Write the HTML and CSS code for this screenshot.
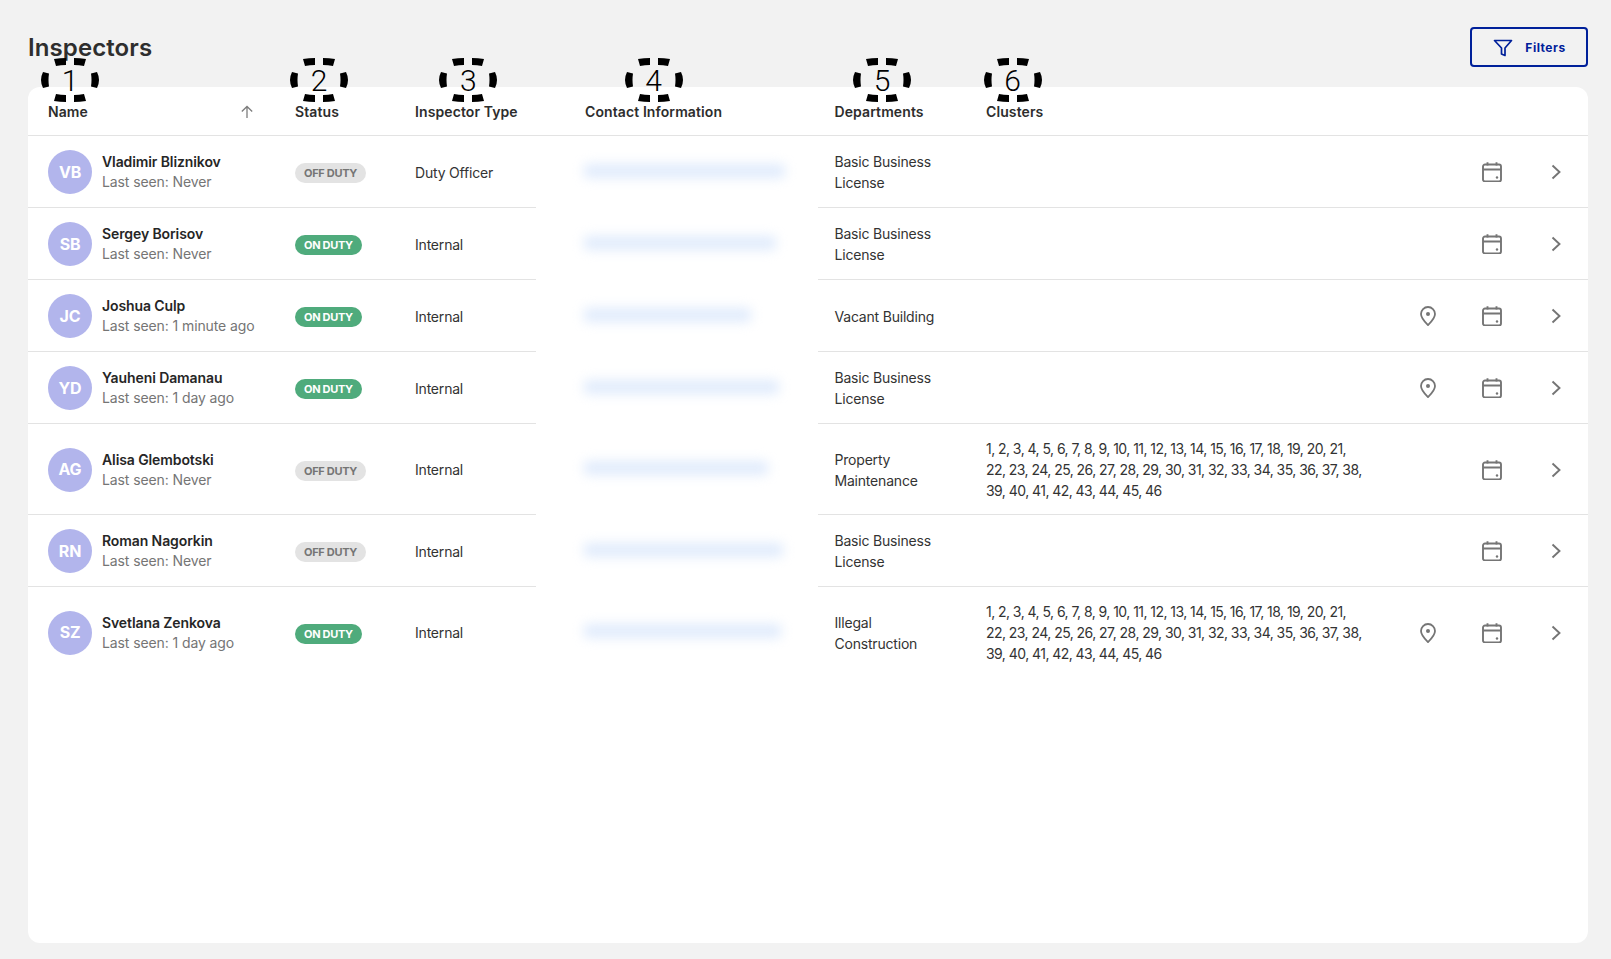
FILE: index.html
```html
<!DOCTYPE html>
<html lang="en">
<head>
<meta charset="utf-8">
<title>Inspectors</title>
<link rel="stylesheet" href="styles.css">
</head>
<body>
<svg class="sprite" aria-hidden="true">
  <symbol id="i-cal" viewBox="0 0 20 20"><path d="M3 2.500h14a2 2 0 0 1 2 2v13a2 2 0 0 1-2 2H3a2 2 0 0 1-2-2v-13a2 2 0 0 1 2-2ZM1 7.500h18M5.500 0.200v3.600M14.500 0.200v3.600" fill="none" stroke="currentColor" stroke-width="1.900"/><circle cx="15" cy="15.500" r="1.200" fill="currentColor"/></symbol>
  <symbol id="i-pin" viewBox="0 0 16 20"><path d="M8 19C4.500 15.600 1 12.300 1 8a7 7 0 0 1 14 0c0 4.300-3.500 7.600-7 11Z" fill="none" stroke="currentColor" stroke-width="1.800" stroke-linejoin="round"/><circle cx="8" cy="8" r="2" fill="currentColor"/></symbol>
  <symbol id="i-chev" viewBox="0 0 10 16"><path d="M1.500 1.500 8.500 8l-7 6.500" fill="none" stroke="currentColor" stroke-width="1.900"/></symbol>
  <symbol id="i-mark" viewBox="0 0 58 44"><path d="M13 1Q19 0 25 0V7Q20 7 15 8ZM33 0Q39 0 45 1L43 8Q38 7 33 7ZM2 14 8 15.500Q7 22 8 28.500L2 30Q-2 22 2 14ZM56 14 50 15.500Q51 22 50 28.500L56 30Q60 22 56 14ZM13 43Q19 44 25 44V37Q20 37 15 36ZM33 44Q39 44 45 43L43 36Q38 37 33 37Z" fill="#000"/></symbol>
</svg>
<main class="page">
  <header class="topbar">
    <h1 class="title">Inspectors</h1>
    <button class="filters" type="button">
      <svg class="filters-icon" viewBox="0 0 20 18"><path d="M1.500 1.500h17L12 9v7.500L8.500 15V9Z" fill="none" stroke="currentColor" stroke-width="1.700" stroke-linejoin="round"/></svg>
      <span>Filters</span>
    </button>
  </header>
  <section class="card">
    <table class="grid">
      <colgroup>
        <col class="c-name"><col class="c-status"><col class="c-type"><col class="c-contact"><col class="c-dept"><col class="c-clusters"><col class="c-icon"><col class="c-icon"><col class="c-icon">
      </colgroup>
      <thead>
        <tr>
          <th class="first"><div class="name-head"><span class="hd">Name<span class="marker m1"><svg><use href="#i-mark"/></svg><b>1</b></span></span><svg class="sort" viewBox="0 0 14 14"><path d="M7 13V1.500M1.800 6.500 7 1.500l5.200 5" fill="none" stroke="currentColor" stroke-width="1.300"/></svg></div></th>
          <th><span class="hd">Status<span class="marker m2"><svg><use href="#i-mark"/></svg><b>2</b></span></span></th>
          <th><span class="hd">Inspector Type<span class="marker m3"><svg><use href="#i-mark"/></svg><b>3</b></span></span></th>
          <th><span class="hd">Contact Information<span class="marker"><svg><use href="#i-mark"/></svg><b>4</b></span></span></th>
          <th class="dept"><span class="hd">Departments<span class="marker m5"><svg><use href="#i-mark"/></svg><b>5</b></span></span></th>
          <th><span class="hd">Clusters<span class="marker m6"><svg><use href="#i-mark"/></svg><b>6</b></span></span></th>
          <th></th><th></th><th></th>
        </tr>
      </thead>
      <tbody>
        <tr>
          <td class="first"><div class="person"><span class="avatar">VB</span><div><div class="pname">Vladimir Bliznikov</div><div class="seen">Last seen: Never</div></div></div></td>
          <td><span class="badge off">OFF DUTY</span></td>
          <td>Duty Officer</td>
          <td class="contact"><span class="smear" style="width:201px"></span></td>
          <td class="dept">Basic Business License</td>
          <td class="clusters"></td>
          <td class="ic"></td>
          <td class="ic"><svg class="cal"><use href="#i-cal"/></svg></td>
          <td class="ic"><svg class="chev"><use href="#i-chev"/></svg></td>
        </tr>
        <tr>
          <td class="first"><div class="person"><span class="avatar">SB</span><div><div class="pname">Sergey Borisov</div><div class="seen">Last seen: Never</div></div></div></td>
          <td><span class="badge on">ON DUTY</span></td>
          <td>Internal</td>
          <td class="contact"><span class="smear" style="width:192px"></span></td>
          <td class="dept">Basic Business License</td>
          <td class="clusters"></td>
          <td class="ic"></td>
          <td class="ic"><svg class="cal"><use href="#i-cal"/></svg></td>
          <td class="ic"><svg class="chev"><use href="#i-chev"/></svg></td>
        </tr>
        <tr>
          <td class="first"><div class="person"><span class="avatar">JC</span><div><div class="pname">Joshua Culp</div><div class="seen">Last seen: 1 minute ago</div></div></div></td>
          <td><span class="badge on">ON DUTY</span></td>
          <td>Internal</td>
          <td class="contact"><span class="smear" style="width:167px"></span></td>
          <td class="dept">Vacant Building</td>
          <td class="clusters"></td>
          <td class="ic"><svg class="pin"><use href="#i-pin"/></svg></td>
          <td class="ic"><svg class="cal"><use href="#i-cal"/></svg></td>
          <td class="ic"><svg class="chev"><use href="#i-chev"/></svg></td>
        </tr>
        <tr>
          <td class="first"><div class="person"><span class="avatar">YD</span><div><div class="pname">Yauheni Damanau</div><div class="seen">Last seen: 1 day ago</div></div></div></td>
          <td><span class="badge on">ON DUTY</span></td>
          <td>Internal</td>
          <td class="contact"><span class="smear" style="width:195px"></span></td>
          <td class="dept">Basic Business License</td>
          <td class="clusters"></td>
          <td class="ic"><svg class="pin"><use href="#i-pin"/></svg></td>
          <td class="ic"><svg class="cal"><use href="#i-cal"/></svg></td>
          <td class="ic"><svg class="chev"><use href="#i-chev"/></svg></td>
        </tr>
        <tr>
          <td class="first"><div class="person"><span class="avatar">AG</span><div><div class="pname">Alisa Glembotski</div><div class="seen">Last seen: Never</div></div></div></td>
          <td><span class="badge off">OFF DUTY</span></td>
          <td>Internal</td>
          <td class="contact"><span class="smear" style="width:184px"></span></td>
          <td class="dept">Property Maintenance</td>
          <td class="clusters">1, 2, 3, 4, 5, 6, 7, 8, 9, 10, 11, 12, 13, 14, 15, 16, 17, 18, 19, 20, 21, 22, 23, 24, 25, 26, 27, 28, 29, 30, 31, 32, 33, 34, 35, 36, 37, 38, 39, 40, 41, 42, 43, 44, 45, 46</td>
          <td class="ic"></td>
          <td class="ic"><svg class="cal"><use href="#i-cal"/></svg></td>
          <td class="ic"><svg class="chev"><use href="#i-chev"/></svg></td>
        </tr>
        <tr>
          <td class="first"><div class="person"><span class="avatar">RN</span><div><div class="pname">Roman Nagorkin</div><div class="seen">Last seen: Never</div></div></div></td>
          <td><span class="badge off">OFF DUTY</span></td>
          <td>Internal</td>
          <td class="contact"><span class="smear" style="width:199px"></span></td>
          <td class="dept">Basic Business License</td>
          <td class="clusters"></td>
          <td class="ic"></td>
          <td class="ic"><svg class="cal"><use href="#i-cal"/></svg></td>
          <td class="ic"><svg class="chev"><use href="#i-chev"/></svg></td>
        </tr>
        <tr class="last">
          <td class="first"><div class="person"><span class="avatar">SZ</span><div><div class="pname">Svetlana Zenkova</div><div class="seen">Last seen: 1 day ago</div></div></div></td>
          <td><span class="badge on">ON DUTY</span></td>
          <td>Internal</td>
          <td class="contact"><span class="smear" style="width:197px"></span></td>
          <td class="dept">Illegal Construction</td>
          <td class="clusters">1, 2, 3, 4, 5, 6, 7, 8, 9, 10, 11, 12, 13, 14, 15, 16, 17, 18, 19, 20, 21, 22, 23, 24, 25, 26, 27, 28, 29, 30, 31, 32, 33, 34, 35, 36, 37, 38, 39, 40, 41, 42, 43, 44, 45, 46</td>
          <td class="ic"><svg class="pin"><use href="#i-pin"/></svg></td>
          <td class="ic"><svg class="cal"><use href="#i-cal"/></svg></td>
          <td class="ic"><svg class="chev"><use href="#i-chev"/></svg></td>
        </tr>
      </tbody>
    </table>
  </section>
</main>
</body>
</html>
```
FILE: styles.css
```css
* { box-sizing: border-box; }
html, body { margin: 0; height: 100%; }
body {
  background: #f2f2f2;
  color: #333;
  font-family: Inter, "Open Sans", sans-serif;
  font-size: 14px;
  line-height: 21px;
  letter-spacing: -0.2px;
}
.sprite { display: none; }
.page {
  display: flex;
  flex-direction: column;
  height: 959px;
  padding: 27px 23px 16px 28px;
}
.topbar {
  display: flex;
  align-items: center;
  justify-content: space-between;
  height: 40px;
  margin-bottom: 20px;
}
.title {
  margin: 2px 0 0;
  font-size: 24px;
  line-height: 32px;
  font-weight: 600;
  color: #2e2e2e;
  letter-spacing: 0.1px;
}
.filters {
  display: flex;
  align-items: center;
  justify-content: center;
  gap: 12px;
  width: 118px;
  height: 40px;
  padding: 2px 0 0 1px;
  background: transparent;
  border: 2px solid #00209a;
  border-radius: 4px;
  color: #00209a;
  font: 700 12px/16px Inter, sans-serif;
  letter-spacing: 0.5px;
}
.filters-icon { width: 20px; height: 18px; }
.card {
  flex: 1;
  background: #fff;
  border-radius: 12px;
}
.grid {
  width: 100%;
  table-layout: fixed;
  border-collapse: separate;
  border-spacing: 0;
}
.c-name { width: 251px; }
.c-status { width: 120px; }
.c-type { width: 170px; }
.c-contact { width: 249px; }
.c-dept { width: 152px; }
.c-clusters { width: 426px; }
.c-icon { width: 64px; }
th {
  height: 49px;
  padding: 14px 16px 0;
  text-align: left;
  font-size: 14px;
  font-weight: 600;
  color: #2d2d2d;
  border-bottom: 1px solid #e3e3e3;
  vertical-align: top;
  letter-spacing: 0.1px;
}
th.first, td.first { padding-left: 20px; }
td {
  height: 72px;
  padding: 1px 16px 0;
  border-bottom: 1px solid #e3e3e3;
  vertical-align: middle;
}
th.dept, td.dept { padding-left: 16.5px; }
.last td { border-bottom: 0; }
.name-head {
  display: flex;
  align-items: center;
  justify-content: space-between;
}
.hd { position: relative; display: inline-block; white-space: nowrap; }
.sort { width: 14px; height: 14px; color: #7d7d7d; margin-right: 9px; }
.marker {
  position: absolute;
  left: 50%;
  top: -43px;
  width: 58px;
  height: 44px;
  transform: translateX(-50%);
  text-align: center;
}
.m1 { margin-left: 2px; }
.m2 { margin-left: 2px; }
.m3 { margin-left: 2px; }
.m5 { margin-left: 3px; }
.m6 { margin-left: -2px; }
.marker svg { position: absolute; left: 0; top: 0; width: 58px; height: 44px; }
.marker b {
  display: block;
  font: 300 30px/46px Roboto, sans-serif;
  color: #000;
  letter-spacing: 0;
}
.person { display: flex; align-items: center; gap: 10px; }
.avatar {
  display: flex;
  align-items: center;
  justify-content: center;
  flex: none;
  width: 44px;
  height: 44px;
  border-radius: 50%;
  background: #b2b5ec;
  color: #fff;
  font-size: 16px;
  font-weight: 700;
}
.pname { color: #262626; font-weight: 600; line-height: 20px; letter-spacing: -0.1px; }
.seen { color: #757575; line-height: 20px; letter-spacing: -0.1px; }
.badge {
  display: inline-block;
  height: 20px;
  padding: 0 9px;
  border-radius: 10px;
  font-size: 11px;
  line-height: 20px;
  font-weight: 700;
  letter-spacing: -0.3px;
  white-space: nowrap;
  vertical-align: middle;
}
.off { background: #e3e3e3; color: #757575; }
.on { background: #4fab7c; color: #fff; }
.contact { position: relative; border-bottom: 0; }
.contact::after {
  content: "";
  position: absolute;
  left: -33px;
  right: 0;
  bottom: 0;
  height: 1px;
  background: #fff;
}
.smear {
  display: block;
  height: 14px;
  margin: -4px 0 0 -1px;
  background: #e0ebfc;
  border-radius: 4px;
  filter: blur(6px);
}
td.clusters { padding: 14px 30px 13px 16px; letter-spacing: -0.55px; }
.ic { padding: 1px 0 0; text-align: center; color: #757575; line-height: 0; }
.cal { width: 20px; height: 20px; }
.pin { width: 16px; height: 20px; }
.chev { width: 10px; height: 16px; }
```
